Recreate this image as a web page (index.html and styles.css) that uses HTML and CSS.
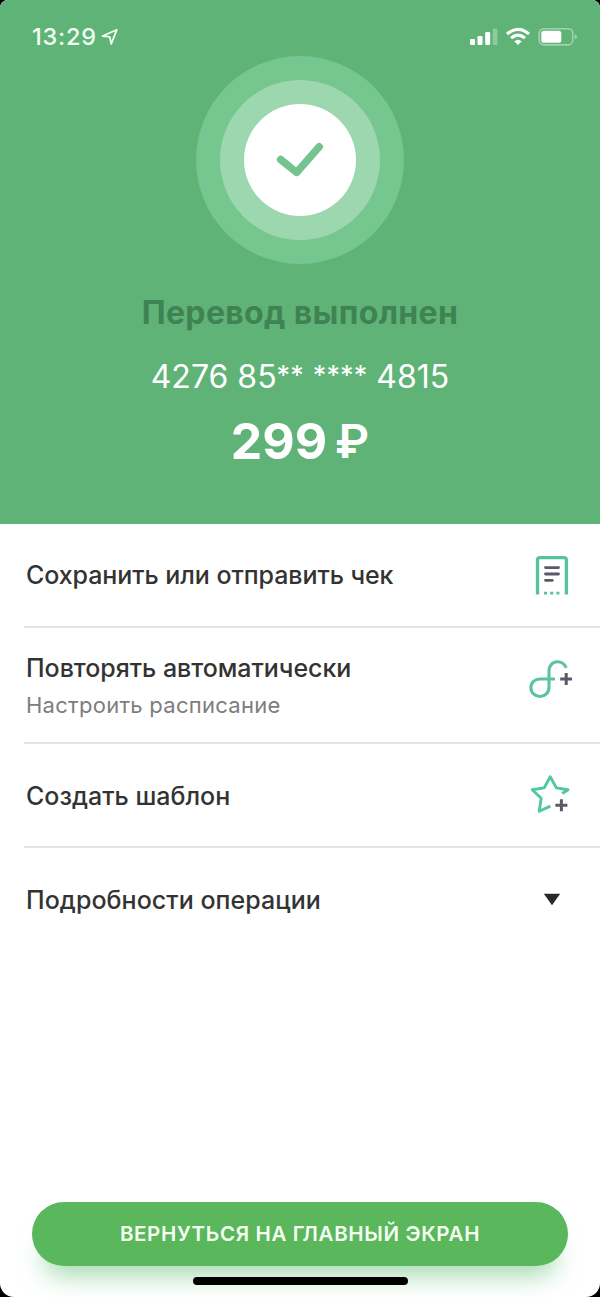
FILE: index.html
```html
<!DOCTYPE html>
<html lang="ru">
<head>
<meta charset="utf-8">
<title>Перевод выполнен</title>
<link rel="stylesheet" href="styles.css">
</head>
<body>
<main class="screen">
  <header class="hero">
    <div class="status">
      <div class="status-left">
        <span class="time">13:29</span>
        <svg class="location" width="18" height="18" viewBox="0 0 18 18"><path d="M1.6 8 15.8 1.8 10.2 15.8 8.7 8.9Z" fill="none" stroke="#effff1" stroke-width="1.8" stroke-linejoin="round"/></svg>
      </div>
      <svg class="status-icons" width="108" height="20" viewBox="0 0 108 20">
        <g fill="#fff">
          <rect x="0" y="12" width="5" height="6" rx="1.2"/>
          <rect x="7.5" y="9" width="5" height="9" rx="1.2"/>
          <rect x="15.2" y="5" width="5" height="13" rx="1.2"/>
          <rect x="22.8" y="1.4" width="4.6" height="16.6" rx="1.2" opacity=".3"/>
        </g>
        <g fill="none" stroke="#fff" stroke-width="3.1">
          <path d="M37 7Q48 -2.4 59 7"/>
          <path d="M41 11.2Q48 5.1 55 11.2"/>
        </g>
        <path d="M44.2 14.3Q48 11 51.8 14.3L48 18Z" fill="#fff"/>
        <rect x="69.2" y="1.7" width="33.6" height="16.2" rx="4.6" fill="none" stroke="#fff" stroke-opacity=".42" stroke-width="1.6"/>
        <rect x="71.3" y="3.8" width="20" height="12" rx="2.6" fill="#fff"/>
        <path d="M104.8 7Q107 8.2 107 9.8T104.8 12.6Z" fill="#fff" fill-opacity=".45"/>
      </svg>
    </div>
    <div class="ring-outer"><div class="ring-inner"><div class="disc">
      <svg width="56" height="44" viewBox="0 0 56 44"><path d="M8.6 21.5 24.6 34.4 47.2 8.7" fill="none" stroke="#75c48f" stroke-width="7.5" stroke-linecap="round" stroke-linejoin="round"/></svg>
    </div></div></div>
    <h1 class="title">Перевод выполнен</h1>
    <div class="card-number">4276 85<span class="stars">**</span> <span class="stars">****</span> 4815</div>
    <div class="amount"><span>299</span><span class="ruble">₽</span></div>
  </header>
  <section class="actions">
    <div class="row row-save">
      <span class="label save-label">Сохранить или отправить чек</span>
      <svg class="icon" width="48" height="48" viewBox="0 0 48 48">
        <path d="M13.5 43.5V9Q13.5 6.7 15.8 6.7H40Q42.4 6.7 42.4 9V43.5" fill="none" stroke="#55c39d" stroke-width="3.3"/>
        <path d="M21.5 16.6H34.5M21.5 23H34.5M21.5 29.3H28.3" fill="none" stroke="#5b5868" stroke-width="2.8" stroke-linecap="round"/>
        <path d="M20 42.2H23M26.2 42.2H29.2M32.4 42.2H35.4" stroke="#55c39d" stroke-width="2.8"/>
      </svg>
    </div>
    <div class="row row-repeat">
      <span class="text"><span class="label repeat-label">Повторять автоматически</span><span class="sub">Настроить расписание</span></span>
      <svg class="icon" width="48" height="48" viewBox="0 0 48 48">
        <path d="M42.3 13.8C40.5 10 37.2 7.7 33.6 7.7C28.4 7.7 25 11.8 25 16.8V33.5C25 38.7 21 42.5 16 42.5C10.8 42.5 6.9 38.7 6.9 33.8C6.9 28.7 10.8 25 16 25H31" fill="none" stroke="#5cc3a0" stroke-width="3.1"/>
        <path d="M36.2 25H48M42.2 19V31" stroke="#5b5868" stroke-width="3"/>
      </svg>
    </div>
    <div class="row row-template">
      <span class="label template-label">Создать шаблон</span>
      <svg class="icon" width="48" height="48" viewBox="0 0 48 48">
        <path d="M38.2 24.5 44 20.8 32.4 18.9 26.2 7.8 20.2 18.9 8.2 20.8 17.2 29.2 15.2 42.2 26.3 37.1" fill="none" stroke="#51c7a1" stroke-width="2.9" stroke-linejoin="round"/>
        <path d="M31.4 36.2H43.4M37.4 30.2V42.2" stroke="#5b5868" stroke-width="3"/>
      </svg>
    </div>
    <div class="row row-details">
      <span class="label details-label">Подробности операции</span>
      <svg class="arrow" width="18" height="13" viewBox="0 0 18 13"><path d="M.8.8H17.2L9 12.2Z" fill="#292929"/></svg>
    </div>
  </section>
  <footer class="bottom">
    <button class="home-button"><span>ВЕРНУТЬСЯ НА ГЛАВНЫЙ ЭКРАН</span></button>
    <div class="home-indicator"></div>
  </footer>
</main>
</body>
</html>
```
FILE: styles.css
```css
* { box-sizing: border-box; }
html { background: #000; }
body { margin: 0; font-family: Inter, "Noto Sans", sans-serif; color: #333; }
.screen {
  width: 600px; height: 1297px; display: flex; flex-direction: column;
  overflow: hidden; background: #fff; border-radius: 8px 8px 14px 14px;
}
.hero {
  height: 524px; flex: none; display: flex; flex-direction: column;
  align-items: center; background: #5fb377; color: #fff;
}
.status {
  width: 100%; height: 56px; padding: 18px 22px 0 32px; flex: none;
  display: flex; justify-content: space-between;
}
.status-left { display: flex; align-items: flex-start; gap: 4px; color: #effff1; }
.time { font-size: 23.5px; line-height: 38px; font-weight: 500; letter-spacing: .8px; }
.location { margin-top: 10px; }
.status-icons { margin-top: 9px; }
.ring-outer, .ring-inner, .disc { display: flex; align-items: center; justify-content: center; border-radius: 50%; flex: none; }
.ring-outer { width: 208px; height: 208px; background: #76c78f; }
.ring-inner { width: 160px; height: 160px; background: #9dd7af; }
.disc { width: 112px; height: 112px; background: #fff; }
.title { margin: 29px 0 0; font-size: 32px; line-height: 40px; font-weight: 700; letter-spacing: .35px; color: #3f8354; white-space: nowrap; }
.card-number { margin-top: 24px; font-size: 32px; line-height: 40px; white-space: nowrap; }
.stars { font-size: 27px; line-height: 0; vertical-align: 3px; letter-spacing: .1px; }
.amount { margin-top: 14px; display: flex; gap: 8px; font-size: 50px; line-height: 60px; font-weight: 700; }
.ruble { font-size: 47px; font-weight: 600; }
.row { display: flex; justify-content: space-between; align-items: center; margin-left: 24px; padding: 0 28px 0 2px; border-bottom: 2px solid #e4e4e5; }
.row-save { height: 104px; }
.row-repeat { height: 116px; }
.row-template { height: 104px; }
.row-details { height: 104px; border: 0; padding-right: 39px; }
.label { font-size: 25px; line-height: 34px; font-weight: 500; white-space: nowrap; }
.save-label { letter-spacing: -.07px; }
.repeat-label { letter-spacing: -.04px; }
.template-label { padding-top: 2px; }
.details-label { letter-spacing: .05px; }
.text { display: flex; flex-direction: column; gap: 3px; padding-top: 3px; }
.sub { font-size: 22px; line-height: 34px; letter-spacing: .27px; color: #7d7d7d; }
.icon { flex: none; }
.row-repeat .icon { margin-bottom: 14px; }
.row-template .icon { margin-bottom: 5px; }
.arrow { margin-bottom: 2px; }
.bottom { margin-top: auto; height: 95px; flex: none; display: flex; flex-direction: column; align-items: center; }
.home-button {
  width: 536px; height: 64px; flex: none; border: 0; padding: 0; border-radius: 32px;
  background: #5ab75b; color: #f4fff2; box-shadow: 0 22px 24px -12px rgba(80, 185, 105, .5);
  font: 600 20.5px/64px Inter, "Noto Sans", sans-serif; letter-spacing: .65px;
}
.home-indicator { width: 215px; height: 8px; margin-top: 11px; border-radius: 4px; background: #000; position: relative; }
```
